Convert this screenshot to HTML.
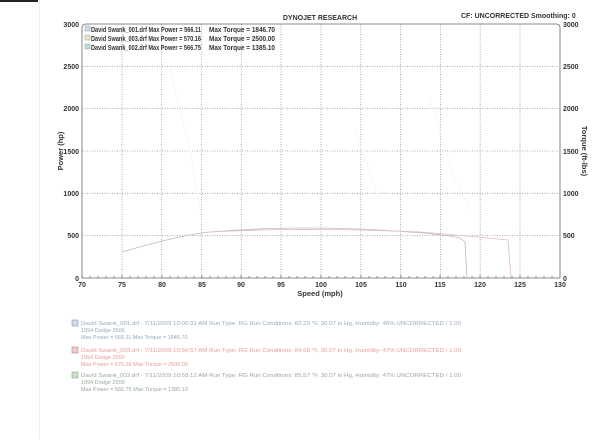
<!DOCTYPE html>
<html><head><style>
body{margin:0;width:604px;height:439px;background:#fff;overflow:hidden;font-family:"Liberation Sans",sans-serif}
</style></head><body>
<svg width="604" height="439" xmlns="http://www.w3.org/2000/svg" font-family="Liberation Sans, sans-serif">
<rect x="0" y="0" width="38" height="2" fill="#222"/>
<line x1="39.5" y1="0" x2="39.5" y2="439" stroke="#eee"/>
<g stroke="#999" stroke-width="0.8" stroke-dasharray="1,1.5">
<line x1="82" y1="235.6" x2="560" y2="235.6"/><line x1="82" y1="193.3" x2="560" y2="193.3"/>
<line x1="82" y1="151" x2="560" y2="151"/><line x1="82" y1="108.6" x2="560" y2="108.6"/>
<line x1="82" y1="66.3" x2="560" y2="66.3"/>
<line x1="122" y1="24" x2="122" y2="278"/><line x1="161.7" y1="24" x2="161.7" y2="278"/>
<line x1="201.5" y1="24" x2="201.5" y2="278"/><line x1="241.3" y1="24" x2="241.3" y2="278"/>
<line x1="281" y1="24" x2="281" y2="278"/><line x1="321" y1="24" x2="321" y2="278"/>
<line x1="360.8" y1="24" x2="360.8" y2="278"/><line x1="400.6" y1="24" x2="400.6" y2="278"/>
<line x1="440.4" y1="24" x2="440.4" y2="278"/><line x1="480.2" y1="24" x2="480.2" y2="278"/>
<line x1="520" y1="24" x2="520" y2="278"/>
</g>
<path d="M82,278 V28 Q82,24 86,24 H556 Q560,24 560,28 V278 Z" fill="none" stroke="#666" stroke-width="0.8"/>
<g stroke="#666" stroke-width="0.7">
<path d="M82,278v-3M90,278v-2M98,278v-2M106,278v-2M114,278v-2M122,278v-3M130,278v-2M138,278v-2M146,278v-2M154,278v-2M162,278v-3M170,278v-2M178,278v-2M186,278v-2M194,278v-2M202,278v-3M210,278v-2M218,278v-2M226,278v-2M234,278v-2M241,278v-3M249,278v-2M257,278v-2M265,278v-2M273,278v-2M281,278v-3M289,278v-2M297,278v-2M305,278v-2M313,278v-2M321,278v-3M329,278v-2M337,278v-2M345,278v-2M353,278v-2M361,278v-3M369,278v-2M377,278v-2M385,278v-2M393,278v-2M401,278v-3M409,278v-2M417,278v-2M425,278v-2M433,278v-2M440,278v-3M448,278v-2M456,278v-2M464,278v-2M472,278v-2M480,278v-3M488,278v-2M496,278v-2M504,278v-2M512,278v-2M520,278v-3M528,278v-2M536,278v-2M544,278v-2M552,278v-2"/>
</g>
<g font-size="7" fill="#333" font-weight="bold">
<g text-anchor="end"><text x="79" y="27">3000</text><text x="79" y="69">2500</text><text x="79" y="111">2000</text><text x="79" y="154">1500</text><text x="79" y="196">1000</text><text x="79" y="238">500</text><text x="79" y="281">0</text></g>
<g><text x="563" y="27">3000</text><text x="563" y="69">2500</text><text x="563" y="111">2000</text><text x="563" y="154">1500</text><text x="563" y="196">1000</text><text x="563" y="238">500</text><text x="563" y="281">0</text></g>
<g text-anchor="middle"><text x="82" y="287">70</text><text x="122" y="287">75</text><text x="162" y="287">80</text><text x="202" y="287">85</text><text x="241" y="287">90</text><text x="281" y="287">95</text><text x="321" y="287">100</text><text x="361" y="287">105</text><text x="401" y="287">110</text><text x="440" y="287">115</text><text x="480" y="287">120</text><text x="520" y="287">125</text><text x="560" y="287">130</text>
<text x="320" y="296" font-size="7.5">Speed (mph)</text>
<text x="320" y="20">DYNOJET RESEARCH</text></g>
<text x="461" y="18">CF: UNCORRECTED  Smoothing: 0</text>
<text transform="translate(63,151) rotate(-90)" text-anchor="middle" font-size="7.5">Power (hp)</text>
<text transform="translate(582,151) rotate(90)" text-anchor="middle" font-size="7.5">Torque (ft-lbs)</text>
<text x="91" y="32" textLength="110" lengthAdjust="spacingAndGlyphs">David Swank_001.drf Max Power = 566.11</text><text x="209" y="32" textLength="66" lengthAdjust="spacingAndGlyphs">Max Torque = 1846.70</text>
<text x="91" y="41" textLength="110" lengthAdjust="spacingAndGlyphs">David Swank_003.drf Max Power = 570.16</text><text x="209" y="41" textLength="66" lengthAdjust="spacingAndGlyphs">Max Torque = 2500.00</text>
<text x="91" y="50" textLength="110" lengthAdjust="spacingAndGlyphs">David Swank_002.drf Max Power = 566.75</text><text x="209" y="50" textLength="66" lengthAdjust="spacingAndGlyphs">Max Torque = 1385.10</text>
</g>
<rect x="85" y="26" width="5" height="5" fill="#cde" stroke="#999" stroke-width=".5"/>
<rect x="85" y="35" width="5" height="5" fill="#dec" stroke="#999" stroke-width=".5"/>
<rect x="85" y="44" width="5" height="5" fill="#bdc" stroke="#999" stroke-width=".5"/>
<path d="M122,252 Q180,235 210,232 Q280,226 360,229 Q440,233 460,238 L465,242 L467,278" fill="none" stroke="#bbb" stroke-width="0.8"/>
<path d="M210,232 Q300,227 420,232 Q480,237 508,240 L511,278" fill="none" stroke="#dbb" stroke-width="0.8"/>
<path d="M170,70 L190,150 L200,210 M355,130 L380,200 M430,100 L455,180 L470,210" fill="none" stroke="#f4f4f4" stroke-width="0.8"/>
<g font-size="5.5">
<rect x="72" y="320" width="6" height="6" fill="#cde" stroke="#89a" stroke-width=".6"/>
<text x="81" y="325" fill="#9ab" textLength="380" lengthAdjust="spacingAndGlyphs">David Swank_001.drf - 7/11/2009 10:00:31 AM  Run Type: RG  Run Conditions: 83.29 °F, 30.07 in Hg, Humidity: 46%  UNCORRECTED / 1.00</text>
<text x="81" y="332" fill="#9ab">1994 Dodge 2500</text><text x="81" y="339" fill="#9ab">Max Power = 566.11  Max Torque = 1846.70</text>
<rect x="72" y="347" width="6" height="6" fill="#ecc" stroke="#b88" stroke-width=".6"/>
<text x="81" y="352" fill="#e99" textLength="380" lengthAdjust="spacingAndGlyphs">David Swank_003.drf - 7/11/2009 10:56:57 AM  Run Type: RG  Run Conditions: 84.68 °F, 30.07 in Hg, Humidity: 47%  UNCORRECTED / 1.00</text>
<text x="81" y="359" fill="#e99">1994 Dodge 2500</text><text x="81" y="366" fill="#e99">Max Power = 570.16  Max Torque = 2500.00</text>
<rect x="72" y="372" width="6" height="6" fill="#cdc" stroke="#8a8" stroke-width=".6"/>
<text x="81" y="377" fill="#9a9" textLength="380" lengthAdjust="spacingAndGlyphs">David Swank_002.drf - 7/11/2009 10:58:12 AM  Run Type: RG  Run Conditions: 85.57 °F, 30.07 in Hg, Humidity: 47%  UNCORRECTED / 1.00</text>
<text x="81" y="384" fill="#9a9">1994 Dodge 2500</text><text x="81" y="391" fill="#9a9">Max Power = 566.75  Max Torque = 1385.10</text>
</g>
</svg>
</body></html>
